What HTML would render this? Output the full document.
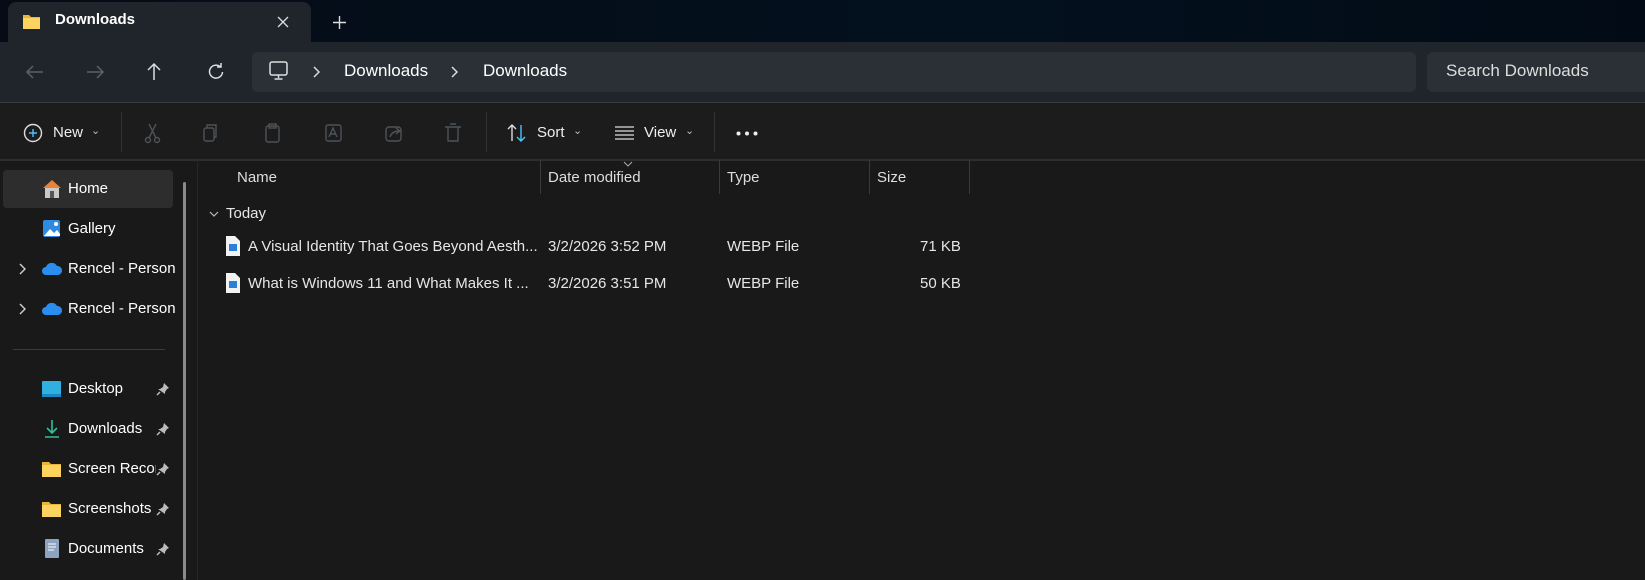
<!DOCTYPE html>
<html><head><meta charset="utf-8"><style>
*{margin:0;padding:0;box-sizing:border-box}
body{width:1645px;height:580px;overflow:hidden;background:#191919;font-family:"Segoe UI","Liberation Sans",sans-serif;color:#fff;position:relative}
.a{position:absolute;white-space:nowrap}
.top{left:0;top:0;width:1645px;height:42px;background:linear-gradient(90deg,#050c16,#03101e 60%,#020b15)}
.tab{left:8px;top:2px;width:303px;height:42px;background:#1f252b;border-radius:8px 8px 0 0}
.nav{left:0;top:42px;width:1645px;height:60px;background:#1f252b}
.addr{left:252px;top:52px;width:1164px;height:40px;background:#2a3036;border-radius:6px}
.search{left:1427px;top:52px;width:230px;height:40px;background:#2a3036;border-radius:6px}
.cmd{left:0;top:102px;width:1645px;height:58px;background:#1c1c1c;border-top:1px solid #3a3d40;border-bottom:1px solid #2e2e2e}
.t15{font-size:15px;color:#eee}
.sep{width:1px;height:40px;background:#333;top:112px}
.side{font-size:15px;color:#fff}
.hd{font-size:15px;color:#ddd;top:169px}
.cd{width:1px;height:34px;background:#3a3a3a;top:160px}
.row{font-size:15px;color:#e6e6e6}
.chev{font-size:11px;color:#bbb}
</style></head><body>
<div class="a top"></div>
<div class="a tab"></div>
<svg class="a" style="left:23px;top:14px" width="17" height="15" viewBox="0 0 17 15"><path d="M0 1h6l2 2h9v12H0z" fill="#e8b43a"/><rect y="4" width="17" height="11" fill="#fcd35f"/></svg>
<div class="a" style="left:55px;top:11px;font-size:15px;font-weight:bold">Downloads</div>
<svg class="a" style="left:277px;top:16px" width="12" height="12" viewBox="0 0 12 12" stroke="#ddd" stroke-width="1.3"><path d="M1 1l10 10M11 1 1 11"/></svg>
<svg class="a" style="left:333px;top:16px" width="13" height="13" viewBox="0 0 13 13" stroke="#ddd" stroke-width="1.4"><path d="M6.5 0v13M0 6.5h13"/></svg>
<div class="a nav"></div>
<div class="a addr"></div>
<div class="a search"></div>
<svg class="a" style="left:24px;top:62px" width="210" height="20" viewBox="0 0 210 20" fill="none" stroke-width="1.5">
<path d="M19 10H3M9 4 3 10l6 6" stroke="#5d6166"/>
<path d="M63 10h16M73 4l6 6-6 6" stroke="#5d6166"/>
<path d="M130 18V2M124 8l6-6 6 6" stroke="#ddd"/>
<path d="M196 4.5a6.5 6.5 0 1 0 2.5 5.5M197 1v4h-4" stroke="#ddd"/>
</svg>
<svg class="a" style="left:268px;top:60px" width="22" height="22" viewBox="0 0 22 22" fill="none" stroke="#ddd" stroke-width="1.5"><rect x="2" y="2" width="17" height="13" rx="2"/><path d="M10.5 15v3M6.5 19h8"/></svg>
<svg class="a" style="left:312px;top:66px" width="8" height="12" viewBox="0 0 8 12" fill="none" stroke="#ddd" stroke-width="1.5"><path d="M2 1l5 5-5 5"/></svg>
<div class="a" style="left:344px;top:61px;font-size:17px">Downloads</div>
<svg class="a" style="left:450px;top:66px" width="8" height="12" viewBox="0 0 8 12" fill="none" stroke="#ddd" stroke-width="1.5"><path d="M2 1l5 5-5 5"/></svg>
<div class="a" style="left:483px;top:61px;font-size:17px">Downloads</div>
<div class="a" style="left:1446px;top:61px;font-size:17px;color:#ddd">Search Downloads</div>
<div class="a cmd"></div>
<svg class="a" style="left:23px;top:123px" width="20" height="20" viewBox="0 0 20 20" fill="none" stroke-width="1.4"><circle cx="10" cy="10" r="8.5" stroke="#ddd"/><path d="M10 6v8M6 10h8" stroke="#4cc2ff"/></svg>
<div class="a t15" style="left:53px;top:124px">New</div>
<div class="a chev" style="left:91px;top:124px">⌄</div>
<div class="a sep" style="left:121px"></div>
<svg class="a" style="left:142px;top:121px" width="322" height="24" viewBox="0 0 322 24" fill="none" stroke="#4d5358" stroke-width="1.4">
<circle cx="6" cy="19" r="2.5"/><circle cx="15" cy="19" r="2.5"/><path d="M7 17 14 3M14 17 7 3"/>
<rect x="62" y="7" width="10" height="13" rx="2"/><path d="M65 7V4h9v12h-2"/>
<rect x="124" y="5" width="13" height="16" rx="2"/><rect x="127" y="3" width="7" height="4"/>
<rect x="184" y="4" width="15" height="16" rx="2"/><path d="M187 16l4-9 4 9M188 13h6"/>
<rect x="244" y="6" width="15" height="14" rx="3"/><path d="M248 16q2-6 9-6M254 7l4 3-4 3"/>
<path d="M303 6h16M306 6v14h10V6M308 3h6"/>
</svg>
<div class="a sep" style="left:486px"></div>
<svg class="a" style="left:506px;top:123px" width="22" height="20" viewBox="0 0 22 20" fill="none" stroke-width="1.4"><path d="M6 18V2M2 6l4-4 4 4" stroke="#ddd"/><path d="M15 2v16M11 14l4 4 4-4" stroke="#4cc2ff"/></svg>
<div class="a t15" style="left:537px;top:124px">Sort</div>
<div class="a chev" style="left:573px;top:124px">⌄</div>
<svg class="a" style="left:614px;top:124px" width="21" height="18" viewBox="0 0 21 18" stroke="#ddd" stroke-width="1.3"><path d="M1 3h19M1 7h19M1 11h19M1 15h19"/></svg>
<div class="a t15" style="left:644px;top:124px">View</div>
<div class="a chev" style="left:685px;top:124px">⌄</div>
<div class="a sep" style="left:714px"></div>
<svg class="a" style="left:736px;top:131px" width="22" height="5" viewBox="0 0 22 5" fill="#eee"><circle cx="2.5" cy="2.5" r="2"/><circle cx="11" cy="2.5" r="2"/><circle cx="19.5" cy="2.5" r="2"/></svg>
<div class="a" style="left:0;top:160px;width:1645px;height:1px;background:#2e2e2e"></div>
<div class="a" style="left:3px;top:170px;width:170px;height:38px;background:#2d2d2d;border-radius:4px"></div>
<div class="a" style="left:183px;top:182px;width:3px;height:398px;background:#8a8a8a;border-radius:2px"></div>
<div class="a" style="left:197px;top:160px;width:1px;height:420px;background:#262626"></div>
<svg class="a" style="left:42px;top:179px" width="20" height="20" viewBox="0 0 20 20"><path d="M10 1 1 9h2v10h14V9h2z" fill="#e8833a"/><path d="M3 9h14v10H3z" fill="#c9c9c9"/><rect x="8" y="12" width="4" height="7" fill="#555"/></svg>
<div class="a side" style="left:68px;top:180px">Home</div>
<svg class="a" style="left:42px;top:219px" width="20" height="20" viewBox="0 0 20 20"><rect x="1" y="1" width="17" height="17" rx="2" fill="#2f8be0"/><path d="M2 17l6-7 4 4 3-3 3 4v2H2z" fill="#fff"/><circle cx="14" cy="5" r="2" fill="#fff"/></svg>
<div class="a side" style="left:68px;top:220px">Gallery</div>
<svg class="a" style="left:18px;top:263px" width="8" height="12" viewBox="0 0 8 12" fill="none" stroke="#ccc" stroke-width="1.5"><path d="M2 1l5 5-5 5"/></svg>
<svg class="a" style="left:41px;top:262px" width="22" height="14" viewBox="0 0 22 14"><path d="M5 13a4 4 0 0 1 0-8 6 6 0 0 1 11-1 4.5 4.5 0 0 1 1 9z" fill="#2a8ef0"/></svg>
<div class="a side" style="left:68px;top:260px;width:107px;overflow:hidden">Rencel - Personal</div>
<svg class="a" style="left:18px;top:303px" width="8" height="12" viewBox="0 0 8 12" fill="none" stroke="#ccc" stroke-width="1.5"><path d="M2 1l5 5-5 5"/></svg>
<svg class="a" style="left:41px;top:302px" width="22" height="14" viewBox="0 0 22 14"><path d="M5 13a4 4 0 0 1 0-8 6 6 0 0 1 11-1 4.5 4.5 0 0 1 1 9z" fill="#2a8ef0"/></svg>
<div class="a side" style="left:68px;top:300px;width:107px;overflow:hidden">Rencel - Personal</div>
<div class="a" style="left:13px;top:349px;width:152px;height:1px;background:#3a3a3a"></div>
<svg class="a" style="left:42px;top:381px" width="20" height="18" viewBox="0 0 20 18"><rect width="19" height="16" rx="1" fill="#2fb0e0"/><rect y="13" width="19" height="3" fill="#1a86c5"/></svg>
<div class="a side" style="left:68px;top:380px">Desktop</div>
<svg class="a" style="left:44px;top:419px" width="16" height="20" viewBox="0 0 16 20" fill="none" stroke="#2fc09a" stroke-width="1.6"><path d="M8 1v13M3 9l5 5 5-5M1 18h14"/></svg>
<div class="a side" style="left:68px;top:420px">Downloads</div>
<svg class="a" style="left:42px;top:461px" width="19" height="16" viewBox="0 0 19 16"><path d="M0 1h7l2 2h10v13H0z" fill="#e8b43a"/><rect y="4" width="19" height="12" fill="#fcd35f"/></svg>
<div class="a side" style="left:68px;top:460px;width:88px;overflow:hidden">Screen Recordings</div>
<svg class="a" style="left:42px;top:501px" width="19" height="16" viewBox="0 0 19 16"><path d="M0 1h7l2 2h10v13H0z" fill="#e8b43a"/><rect y="4" width="19" height="12" fill="#fcd35f"/></svg>
<div class="a side" style="left:68px;top:500px">Screenshots</div>
<svg class="a" style="left:45px;top:539px" width="15" height="20" viewBox="0 0 15 20"><rect width="14" height="19" rx="1" fill="#8ea3bf"/><path d="M3 5h8M3 8h8M3 11h6" stroke="#fff" stroke-width="1"/></svg>
<div class="a side" style="left:68px;top:540px">Documents</div>
<svg class="a" style="left:156px;top:382px" width="14" height="14" viewBox="0 0 14 14"><path d="M8 1l5 5-2 1-2 3v2L2 7h2l3-2z" fill="#bbb"/><path d="M4 10 1 13" stroke="#bbb" stroke-width="1.5"/></svg>
<svg class="a" style="left:156px;top:422px" width="14" height="14" viewBox="0 0 14 14"><path d="M8 1l5 5-2 1-2 3v2L2 7h2l3-2z" fill="#bbb"/><path d="M4 10 1 13" stroke="#bbb" stroke-width="1.5"/></svg>
<svg class="a" style="left:156px;top:462px" width="14" height="14" viewBox="0 0 14 14"><path d="M8 1l5 5-2 1-2 3v2L2 7h2l3-2z" fill="#bbb"/><path d="M4 10 1 13" stroke="#bbb" stroke-width="1.5"/></svg>
<svg class="a" style="left:156px;top:502px" width="14" height="14" viewBox="0 0 14 14"><path d="M8 1l5 5-2 1-2 3v2L2 7h2l3-2z" fill="#bbb"/><path d="M4 10 1 13" stroke="#bbb" stroke-width="1.5"/></svg>
<svg class="a" style="left:156px;top:542px" width="14" height="14" viewBox="0 0 14 14"><path d="M8 1l5 5-2 1-2 3v2L2 7h2l3-2z" fill="#bbb"/><path d="M4 10 1 13" stroke="#bbb" stroke-width="1.5"/></svg>
<div class="a hd" style="left:237px">Name</div>
<svg class="a" style="left:623px;top:161px" width="10" height="6" viewBox="0 0 10 6" fill="none" stroke="#aaa" stroke-width="1"><path d="M1 1l4 4 4-4"/></svg>
<div class="a cd" style="left:540px"></div>
<div class="a hd" style="left:548px">Date modified</div>
<div class="a cd" style="left:719px"></div>
<div class="a hd" style="left:727px">Type</div>
<div class="a cd" style="left:869px"></div>
<div class="a hd" style="left:877px">Size</div>
<div class="a cd" style="left:969px"></div>
<svg class="a" style="left:209px;top:211px" width="10" height="6" viewBox="0 0 10 6" fill="none" stroke="#bbb" stroke-width="1.2"><path d="M1 1l4 4 4-4"/></svg>
<div class="a row" style="left:226px;top:205px">Today</div>
<svg class="a" style="left:226px;top:236px" width="14" height="20" viewBox="0 0 14 20"><path d="M0 0h9l5 5v15H0z" fill="#f2f2f2"/><rect x="3" y="8" width="8" height="7" fill="#2c7fd6"/></svg>
<div class="a row" style="left:248px;top:238px">A Visual Identity That Goes Beyond Aesth...</div>
<div class="a row" style="left:548px;top:238px">3/2/2026 3:52 PM</div>
<div class="a row" style="left:727px;top:238px">WEBP File</div>
<div class="a row" style="left:920px;top:238px">71 KB</div>
<svg class="a" style="left:226px;top:273px" width="14" height="20" viewBox="0 0 14 20"><path d="M0 0h9l5 5v15H0z" fill="#f2f2f2"/><rect x="3" y="8" width="8" height="7" fill="#2c7fd6"/></svg>
<div class="a row" style="left:248px;top:275px">What is Windows 11 and What Makes It ...</div>
<div class="a row" style="left:548px;top:275px">3/2/2026 3:51 PM</div>
<div class="a row" style="left:727px;top:275px">WEBP File</div>
<div class="a row" style="left:920px;top:275px">50 KB</div>
</body></html>
